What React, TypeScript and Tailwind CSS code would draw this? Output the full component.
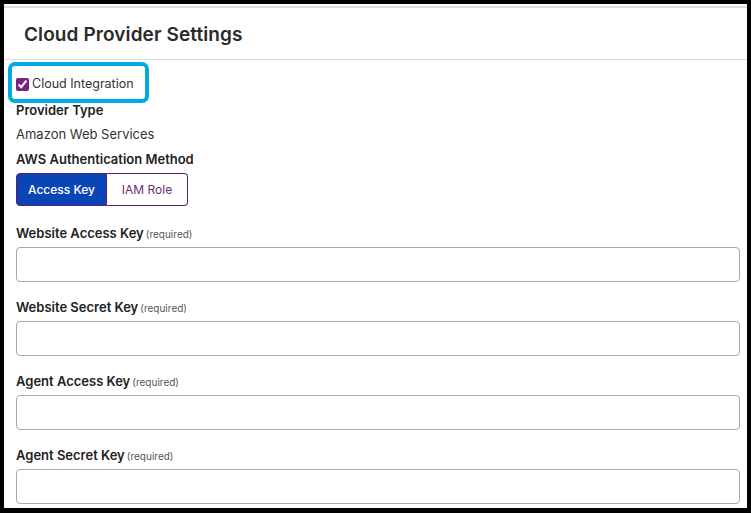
import { useState } from "react"

const fields = [
  "Website Access Key",
  "Website Secret Key",
  "Agent Access Key",
  "Agent Secret Key",
]

export default function App() {
  const [method, setMethod] = useState<"key" | "role">("key")
  const [enabled, setEnabled] = useState(true)

  return (
    <div
      className="h-[513px] w-[751px] overflow-hidden bg-black pl-[4px] pr-[4px] pt-[4px]"
      style={{ fontFamily: "Inter, 'Noto Sans', sans-serif" }}
    >
      <div className="h-[504px] bg-white pt-[2px]">
        <div className="border-t-2 border-[#e0e0e0]" />
        {/* header */}
        <div className="flex h-[52px] items-center border-b border-[#dcdcdc] px-[20px] pt-[3px]">
          <h1 className="text-[19px] font-semibold tracking-[0.1px] text-[#2a2a2a]">
            Cloud Provider Settings
          </h1>
        </div>

        <div className="px-[12px]">
          {/* highlighted checkbox */}
          <div className="mt-[2px] ml-[-8px] flex h-[41px] w-[141px] items-center rounded-[7px] border-[4px] border-[#00a9ea] pl-[4px] pt-[3px]">
            <label className="flex cursor-pointer items-center gap-[3px] text-[12.5px] text-[#333]">
              <input
                type="checkbox"
                checked={enabled}
                onChange={(e) => setEnabled(e.target.checked)}
                className="m-0 h-[13px] w-[13px] accent-[#7b2182]"
              />
              Cloud Integration
            </label>
          </div>

          <div className="mt-[-1px] text-[13px] font-semibold leading-[16px] text-[#222]">
            Provider Type
          </div>
          <div className="mt-[8px] text-[13px] leading-[16px] text-[#333]">Amazon Web Services</div>
          <div className="mt-[9px] text-[13px] font-semibold leading-[16px] text-[#222]">
            AWS Authentication Method
          </div>

          {/* toggle */}
          <div className="mt-[6px] flex h-[33px]">
            <button
              onClick={() => setMethod("key")}
              className={
                method === "key"
                  ? "w-[91px] rounded-l-[4px] border border-[#5a1f73] bg-[#0a45b8] text-[12px] font-medium text-white"
                  : "w-[91px] rounded-l-[4px] border border-[#5a1f73] bg-white text-[12px] text-[#6b2c7c]"
              }
            >
              Access Key
            </button>
            <button
              onClick={() => setMethod("role")}
              className={
                method === "role"
                  ? "w-[81px] rounded-r-[4px] border border-l-0 border-[#5a1f73] bg-[#0a45b8] text-[12px] font-medium text-white"
                  : "w-[81px] rounded-r-[4px] border border-l-0 border-[#5a1f73] bg-white text-[12px] text-[#6b2c7c]"
              }
            >
              IAM Role
            </button>
          </div>

          {/* key fields */}
          <div className="mt-[19px] flex flex-col gap-[17px]">
            {fields.map((f) => (
              <div key={f}>
                <div className="flex h-[16px] items-baseline text-[13px] font-semibold leading-[16px] text-[#222]">
                  {f}
                  <span className="ml-[2px] text-[10px] font-normal leading-[16px] text-[#555]">(required)</span>
                </div>
                <input
                  type="text"
                  className="mt-[6px] block h-[35px] w-[724px] rounded-[4px] border border-[#a9a9a9] px-2 text-[13px] outline-none"
                />
              </div>
            ))}
          </div>
        </div>
      </div>
    </div>
  )
}
